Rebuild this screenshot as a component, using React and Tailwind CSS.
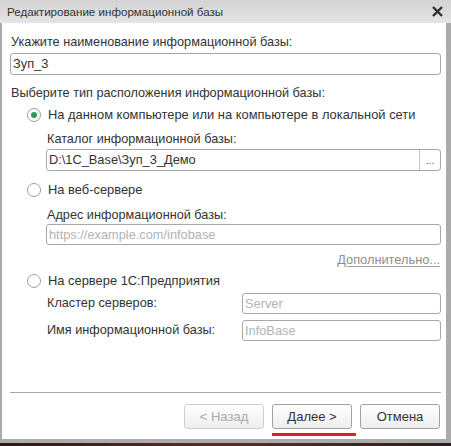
import React from "react";

const font = { fontFamily: '"Liberation Sans", Arial, sans-serif' };

function Radio({ checked, label }) {
  return (
    <div className="flex h-[18px] items-center pl-[17px]">
      <span className="flex h-[14px] w-[14px] items-center justify-center rounded-full border border-[#9d9d9d] bg-white">
        {checked && <span className="h-[6px] w-[6px] rounded-full bg-[#2e9a52]" />}
      </span>
      <span className="ml-[7px] text-[12.9px] leading-[16px] text-[#333]">{label}</span>
    </div>
  );
}

function Field({ value, placeholder, className = "" }) {
  return (
    <div
      className={
        "flex items-center rounded-[3px] border border-[#a8a8a8] bg-white pl-[2px] text-[12.8px] " +
        className
      }
    >
      {value ? (
        <span className="text-[#333]">{value}</span>
      ) : (
        <span className="text-[#b3b3b3]">{placeholder}</span>
      )}
    </div>
  );
}

function Button({ children, disabled }) {
  return (
    <button
      type="button"
      className={
        "h-[25px] w-[80px] rounded-[3px] border bg-gradient-to-b from-white to-[#eeeeee] text-[13px] " +
        (disabled ? "border-[#cfcfcf] text-[#a9a9a9]" : "border-[#a3a3a3] text-[#333]")
      }
    >
      {children}
    </button>
  );
}

export default function App() {
  return (
    <div style={font} className="flex h-[446px] w-[451px] flex-col bg-gradient-to-r from-[#2b1a18] via-[#5a2e28] to-[#2a1f1d]">
      <div className="flex h-[443px] flex-col bg-[#ababab]">
        <div className="flex h-[23px] items-center justify-between bg-gradient-to-b from-[#d3d3d3] to-[#e4e4e4] pl-[7px] pr-[8px]">
          <span className="text-[11.6px] text-[#333]">Редактирование информационной базы</span>
          <svg width="11" height="11" viewBox="0 0 11 11">
            <path d="M1 1 L10 10 M10 1 L1 10" stroke="#2f2f2f" strokeWidth="2.4" />
          </svg>
        </div>
        <div className="ml-[2px] mr-[5px] mb-[4px] flex flex-1 flex-col bg-white pl-[8px] pr-[5px] pt-[11px] pb-[3px]">
          <div className="h-[16px] pl-[1px] text-[12.7px] leading-[16px] text-[#333]">
            Укажите наименование информационной базы:
          </div>
          <Field value="Зуп_3" className="mt-[3px] h-[22px]" />

          <div className="mt-[10px] h-[16px] pl-[1px] text-[12.7px] leading-[16px] text-[#333]">
            Выберите тип расположения информационной базы:
          </div>

          <div className="mt-[5px]">
            <Radio checked label="На данном компьютере или на компьютере в локальной сети" />
          </div>
          <div className="mt-[7px] h-[16px] pl-[37px] text-[12.7px] leading-[16px] text-[#333]">
            Каталог информационной базы:
          </div>
          <div className="ml-[36px] mt-[2px] flex h-[22px] rounded-[3px] border border-[#a8a8a8] bg-white text-[12.8px]">
            <span className="flex flex-1 items-center pl-[2px] text-[#333]">D:\1C_Base\Зуп_3_Демо</span>
            <span className="flex w-[21px] items-end justify-center border-l border-[#c4c4c4] pb-[4px] text-[10px] leading-[10px] text-[#555]">
              ...
            </span>
          </div>

          <div className="mt-[10px]">
            <Radio label="На веб-сервере" />
          </div>
          <div className="mt-[8px] h-[16px] pl-[37px] text-[12.7px] leading-[16px] text-[#333]">
            Адрес информационной базы:
          </div>
          <Field placeholder="https://example.com/infobase" className="ml-[36px] mt-[1px] h-[21px]" />
          <div className="mt-[7px] flex h-[16px] justify-end pr-[1px] text-[12.8px] leading-[16px]">
            <span className="text-[#8f8f8f] underline decoration-[#a0a0a0] underline-offset-2">Дополнительно...</span>
          </div>

          <div className="mt-[4px]">
            <Radio label="На сервере 1С:Предприятия" />
          </div>
          <div className="mt-[3px] flex h-[21px] items-center pl-[37px]">
            <span className="w-[195px] text-[12.7px] text-[#333]">Кластер серверов:</span>
            <Field placeholder="Server" className="h-[21px] flex-1" />
          </div>
          <div className="mt-[6px] flex h-[21px] items-center pl-[37px]">
            <span className="w-[195px] text-[12.7px] text-[#333]">Имя информационной базы:</span>
            <Field placeholder="InfoBase" className="h-[21px] flex-1" />
          </div>

          <div className="flex-1" />
          <div className="h-px bg-[#a9a9a9]" />
          <div className="mt-[11px] flex justify-end gap-[8px] pr-[1px]">
            <Button disabled>&lt; Назад</Button>
            <Button>Далее &gt;</Button>
            <Button>Отмена</Button>
          </div>
          <div className="mt-[4px] flex justify-end pr-[85px]">
            <div className="h-[3px] w-[84px] bg-[#e31e24]" />
          </div>
        </div>
      </div>
    </div>
  );
}
